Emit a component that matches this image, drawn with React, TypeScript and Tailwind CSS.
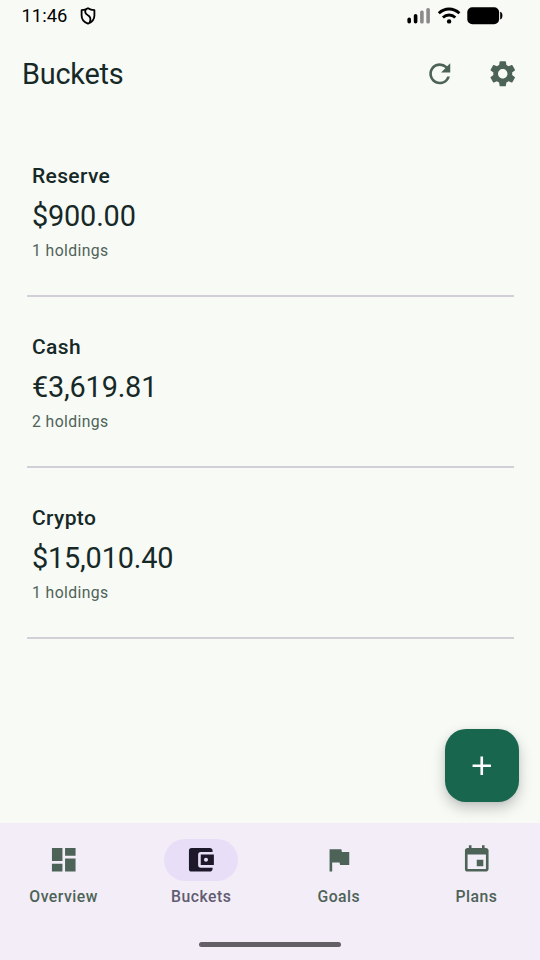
import { useState } from 'react';
import type { IconType } from 'react-icons';
import {
	MdAccountBalanceWallet,
	MdAdd,
	MdDashboard,
	MdEvent,
	MdFlag,
	MdRefresh,
	MdSettings,
} from 'react-icons/md';

interface Bucket {
	name: string;
	total: string;
	holdings: number;
}

interface NavItem {
	label: string;
	icon: IconType;
}

const buckets: Bucket[] = [
	{ name: 'Reserve', total: '$900.00', holdings: 1 },
	{ name: 'Cash', total: '€3,619.81', holdings: 2 },
	{ name: 'Crypto', total: '$15,010.40', holdings: 1 },
];

const navItems: NavItem[] = [
	{ label: 'Overview', icon: MdDashboard },
	{ label: 'Buckets', icon: MdAccountBalanceWallet },
	{ label: 'Goals', icon: MdFlag },
	{ label: 'Plans', icon: MdEvent },
];

const StatusBar = () => (
	<div className="flex h-8 shrink-0 items-center pl-[21.5px] pr-[37px] text-black">
		<span className="-mt-px text-[18.4px] leading-8">11:46</span>
		<svg className="ml-[12.5px] h-[18px] w-[16px]" viewBox="0 0 16 18" fill="none" stroke="currentColor" strokeWidth="1.8">
			<path d="M8 1.2 C10 2.6 12 3.1 14.4 3.2 V8.5 C14.4 12.5 11.8 15.3 8 16.7 C4.2 15.3 1.6 12.5 1.6 8.5 V3.2 C4 3.1 6 2.6 8 1.2 Z" strokeLinejoin="round" />
			<path d="M5.6 2.6 C4.6 5.2 5.2 6.6 7.6 8 C10.5 9.6 11.3 11.8 9.7 15.5" />
		</svg>

		<svg className="ml-auto h-[18px] w-[96px]" viewBox="0 0 96 18">
			{/* Signal */}
			<rect x="0.4" y="10.5" width="3.6" height="6" rx="1.8" />
			<rect x="6.8" y="7" width="3.6" height="9.5" rx="1.8" />
			<rect x="13.1" y="3.5" width="3.6" height="13" rx="1.6" fill="#8b8c8a" />
			<rect x="19.3" y="1" width="3.6" height="15.5" rx="1.6" fill="#8b8c8a" />
			{/* Wifi */}
			<g fill="none" stroke="black" strokeWidth="2.9">
				<path d="M31.8 6.2 C37.8 0.6 46.4 0.6 52.4 6.2" />
				<path d="M35.9 10.5 C39.5 7.2 44.7 7.2 48.3 10.5" />
			</g>
			<circle cx="42.1" cy="14.4" r="2.2" />
			{/* Battery */}
			<rect x="60.3" y="0.2" width="31.8" height="17" rx="5" />
			<path d="M93.2 4.8 Q95.4 5.2 95.4 8.6 Q95.4 12.2 93.2 12.6 Z" />
		</svg>
	</div>
);

const BucketRow = ({ name, total, holdings }: Bucket) => (
	<li className="flex h-[171px] flex-col gap-[5.25px] border-b-2 border-[#d3cfd9] px-[5.5px] pt-[35.25px]">
		<h2 className="text-[21px] font-medium leading-[31.5px] tracking-[0.36px]">{name}</h2>
		<p className="text-[28.875px] leading-[36.75px] tracking-[-0.18px]">{total}</p>
		<p className="text-[15.75px] leading-[21px] tracking-[0.4px] text-[#4e6358]">{holdings} holdings</p>
	</li>
);

export default function App() {
	const [active, setActive] = useState('Buckets');

	return (
		<div className="flex h-[960px] w-[540px] flex-col overflow-hidden bg-[#f8faf6] font-['Roboto',sans-serif] text-[#162927]">
			<StatusBar />

			<header className="flex h-[84px] shrink-0 items-center justify-between pl-[22px] pr-[21.25px]">
				<h1 className="text-[28.875px] leading-[36.75px] tracking-[-0.24px]">Buckets</h1>
				<div className="flex gap-[31.5px] text-[#4e6358]">
					<button aria-label="Refresh">
						<MdRefresh className="size-[31.5px]" />
					</button>
					<button aria-label="Settings">
						<MdSettings className="size-[31.5px]" />
					</button>
				</div>
			</header>

			<main className="relative min-h-0 flex-1 px-[26.5px] pt-[10px]">
				<ul>
					{buckets.map((bucket) => (
						<BucketRow key={bucket.name} {...bucket} />
					))}
				</ul>

				<button
					aria-label="Add bucket"
					className="absolute bottom-[21px] right-[21.25px] flex size-[73.5px] items-center justify-center rounded-[21px] bg-[#19664f] text-white shadow-[0_6px_14px_rgba(0,0,0,0.22),0_1px_4px_rgba(0,0,0,0.06)]"
				>
					<MdAdd className="size-[31.5px]" />
				</button>
			</main>

			<nav className="relative h-[136.75px] shrink-0 bg-[#f3edf7]">
				<div className="grid grid-cols-4 gap-[10.5px] pt-[15.5px]">
					{navItems.map(({ label, icon: Icon }) => {
						const selected = label === active;
						return (
							<button
								key={label}
								onClick={() => setActive(label)}
								className={`flex flex-col items-center gap-[4.75px] ${selected ? 'text-[#625b71]' : 'text-[#4e6358]'}`}
							>
								<span
									className={`flex h-[42px] w-[73.5px] items-center justify-center rounded-full ${selected ? 'bg-[#e8def8] text-[#1d192b]' : ''}`}
								>
									<Icon className="size-[31.5px]" />
								</span>
								<span className="text-[15.75px] font-medium leading-[21px] tracking-[0.48px]">{label}</span>
							</button>
						);
					})}
				</div>
				{/* Gesture handle */}
				<div className="absolute bottom-[13px] left-1/2 h-[5px] w-[142px] -translate-x-1/2 rounded-full bg-[#626066]" />
			</nav>
		</div>
	);
}
